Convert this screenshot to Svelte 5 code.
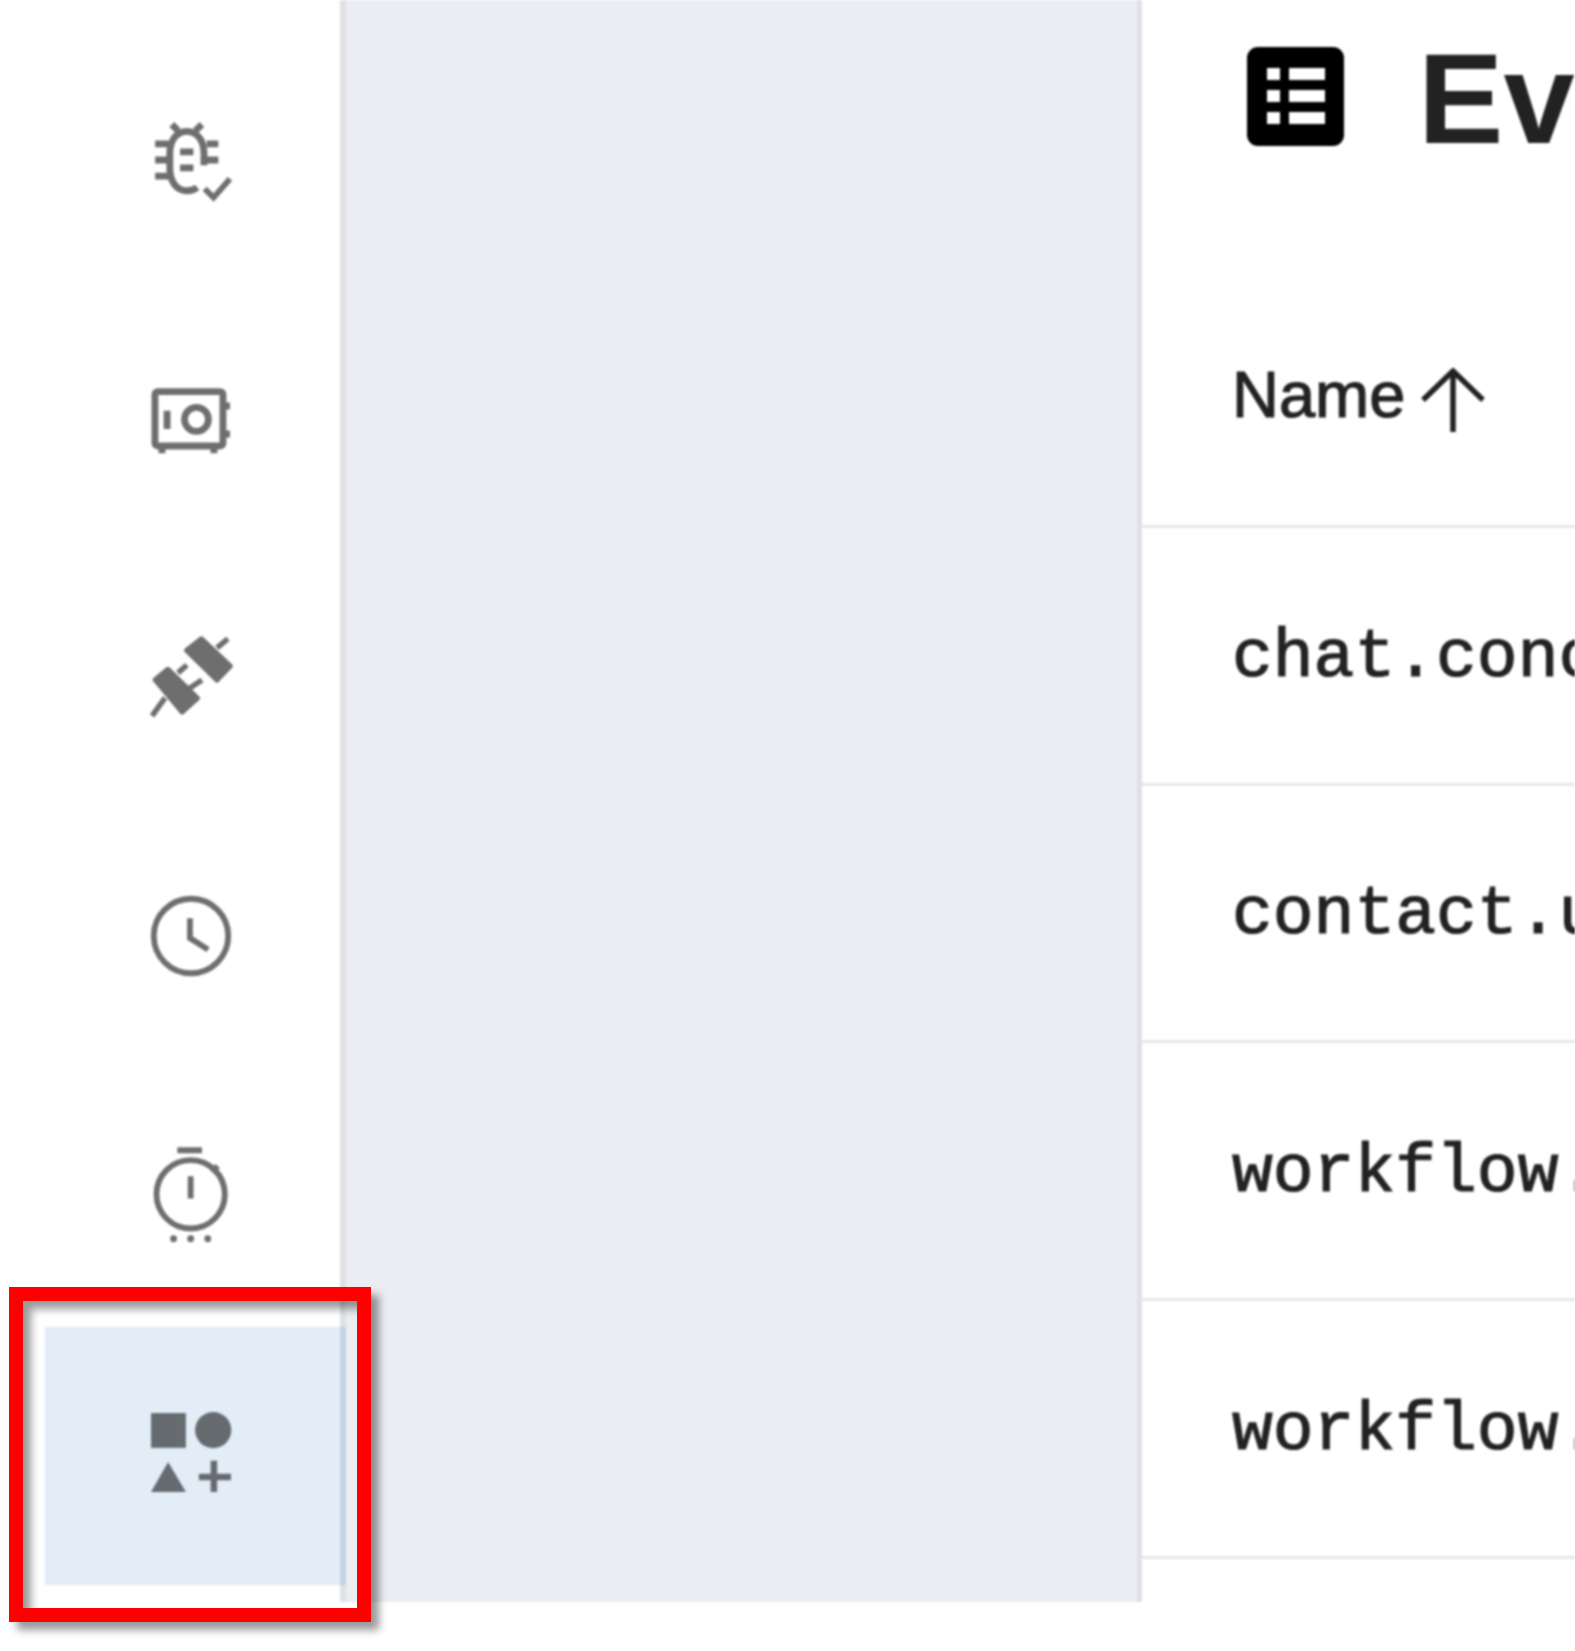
<script>
  let rows = ["chat.concluded", "contact.updated", "workflow.started", "workflow.finished"];
</script>

<div class="shot">
  <div class="page">
    <nav class="sidebar">
      <div class="item">
        <svg class="icon" viewBox="0 0 24 24" fill="none" stroke="#6e6e6e" stroke-width="2">
          <path d="M15.8 13.5V10C15.8 6 13.5 3.6 10.8 3.6 8 3.6 5.8 6 5.8 10V14.5C5.8 18.5 8 21 10.8 21 12 21 13 20.7 13.8 20" />
          <path d="M6.4 1.6L8.2 3.4M15.2 1.6L13.3 3.4M1.5 7.3H5.3M1.5 12H5.3M1.5 16.7H5.3M16.6 7.3H20M16.6 12H20M8.8 9.6H12.7M8.8 14.3H12.7" />
          <path d="M16 20.4L18.6 23 23.4 17.5" stroke-width="1.7" />
        </svg>
      </div>
      <div class="item">
        <svg class="icon" viewBox="0 0 24 24" fill="none" stroke="#6e6e6e" stroke-width="2">
          <rect x="1.45" y="4" width="19.9" height="15.9" rx="0.8" />
          <circle cx="13.6" cy="12.1" r="3.5" />
          <path d="M5 9.6V14.9M21.5 8.2H23.4M21.5 16.4H23.4M3.5 20V22M18.7 20V22" />
        </svg>
      </div>
      <div class="item">
        <svg class="icon" viewBox="0 0 24 24" fill="#6e6e6e" stroke="#6e6e6e" stroke-width="1.6" stroke-linejoin="round">
          <path d="M15 .9L10.8 4.2 19.6 12.8 23.4 8.8Z" />
          <path d="M5.2 9.8L1.6 12.8 9.4 22.2 13.8 18.2Z" />
          <path d="M19.6 3.5L22.8.8M8.2 10.8L10.8 8.5M10.8 15.8L15.2 12.9M4.4 18.1L.6 23.4" fill="none" />
        </svg>
      </div>
      <div class="item">
        <svg class="icon" viewBox="0 0 24 24" fill="none" stroke="#6e6e6e" stroke-width="1.7">
          <circle cx="12" cy="12" r="10.9" />
          <path d="M11.7 6.8V12.6L17 16" />
        </svg>
      </div>
      <div class="item">
        <svg class="icon" viewBox="0 0 24 24" fill="none" stroke="#6e6e6e" stroke-width="1.7">
          <circle cx="11.9" cy="11.8" r="10" />
          <path d="M8 -1.1H15.2M11.9 6.5V13M18.2 5.3L19.8 3.5" />
          <g fill="#6e6e6e" stroke="none">
            <circle cx="6.9" cy="24.8" r="1" />
            <circle cx="11.9" cy="24.8" r="1" />
            <circle cx="16.9" cy="24.8" r="1" />
          </g>
        </svg>
      </div>
      <div class="item selected">
        <svg class="icon" viewBox="0 0 24 24" fill="#666b70">
          <rect x="0.3" y="0.3" width="10.2" height="10.2" />
          <circle cx="18.5" cy="5.3" r="5.3" />
          <path d="M5.3 14.6L.3 23.4H10.5Z" />
          <path d="M14.3 19H23.7M18.7 14.3V23.4" fill="none" stroke="#666b70" stroke-width="1.9" />
        </svg>
      </div>
    </nav>

    <div class="middle"></div>

    <main class="main">
      <div class="title">
        <svg class="title-icon" viewBox="0 0 97 99">
          <rect width="97" height="99" rx="11" fill="#000" />
          <g fill="#fff">
            <rect x="20" y="21" width="13" height="12" />
            <rect x="42" y="21" width="36" height="12" />
            <rect x="20" y="43" width="13" height="12" />
            <rect x="42" y="43" width="36" height="12" />
            <rect x="20" y="65" width="13" height="12" />
            <rect x="42" y="65" width="36" height="12" />
          </g>
        </svg>
        <h1>Events</h1>
      </div>
      <div class="row head">
        <span>Name</span>
        <svg class="arrow" viewBox="0 0 64 64" fill="none" stroke="#222" stroke-width="5.5">
          <path d="M32 64V4M2 32L32 3 62 32" />
        </svg>
      </div>
      {#each rows as name}
        <div class="row cell">{name}</div>
      {/each}
    </main>
  </div>
  <div class="frame"></div>
</div>

<style>
  :global(body) {
    background: #fff;
  }
  .shot {
    position: relative;
    width: 1575px;
    height: 1651px;
    overflow: hidden;
    background: #fff;
  }
  .page {
    display: flex;
    height: 1602px;
    filter: blur(0.8px);
  }
  .sidebar {
    box-sizing: border-box;
    flex: 0 0 346px;
    padding-top: 31px;
    background: #fff;
    border-right: 6px solid #e0e1e6;
  }
  .item {
    height: 258.6px;
    display: flex;
    align-items: center;
    padding-left: 150px;
    box-sizing: border-box;
  }
  .item.selected {
    margin: 3px -6px 0 45px;
    height: 258px;
    padding: 0 0 6px 105px;
    background: #e3edf7;
    border-right: 6px solid #c5d3e0;
  }
  .icon {
    width: 82px;
    height: 82px;
    overflow: visible;
  }
  .middle {
    flex: 0 0 791px;
    background: #ecedf2;
  }
  .main {
    flex: 1;
    min-width: 0;
    border-left: 5px solid #dfe0e5;
    color: #222;
    overflow: hidden;
  }
  .title {
    box-sizing: border-box;
    height: 270px;
    display: flex;
    align-items: flex-start;
    padding: 47px 0 0 105px;
    gap: 74px;
  }
  .title-icon {
    flex: none;
    width: 97px;
    height: 99px;
  }
  h1 {
    margin: 0;
    font-family: "Liberation Sans", sans-serif;
    font-weight: 700;
    font-size: 128px;
    line-height: 104px;
    white-space: nowrap;
  }
  .row {
    box-sizing: border-box;
    height: 257.8px;
    display: flex;
    align-items: center;
    padding-left: 90px;
    border-bottom: 3px solid #e6e7ea;
    white-space: nowrap;
  }
  .head {
    font-family: "Liberation Sans", sans-serif;
    font-size: 65px;
    gap: 16px;
    padding-bottom: 6px;
    -webkit-text-stroke: 1.2px #222;
  }
  .arrow {
    flex: none;
    width: 64px;
    height: 64px;
    margin-top: 11px;
  }
  .cell {
    font-family: "Liberation Mono", monospace;
    font-size: 68px;
    padding-top: 4px;
    -webkit-text-stroke: 1.2px #222;
  }
  .frame {
    position: absolute;
    left: 9px;
    top: 1287px;
    width: 362px;
    height: 335px;
    box-sizing: border-box;
    border: 14px solid #f00;
    box-shadow: 8px 8px 8px rgba(0, 0, 0, 0.4), inset 8px 8px 8px rgba(0, 0, 0, 0.4);
  }
</style>
